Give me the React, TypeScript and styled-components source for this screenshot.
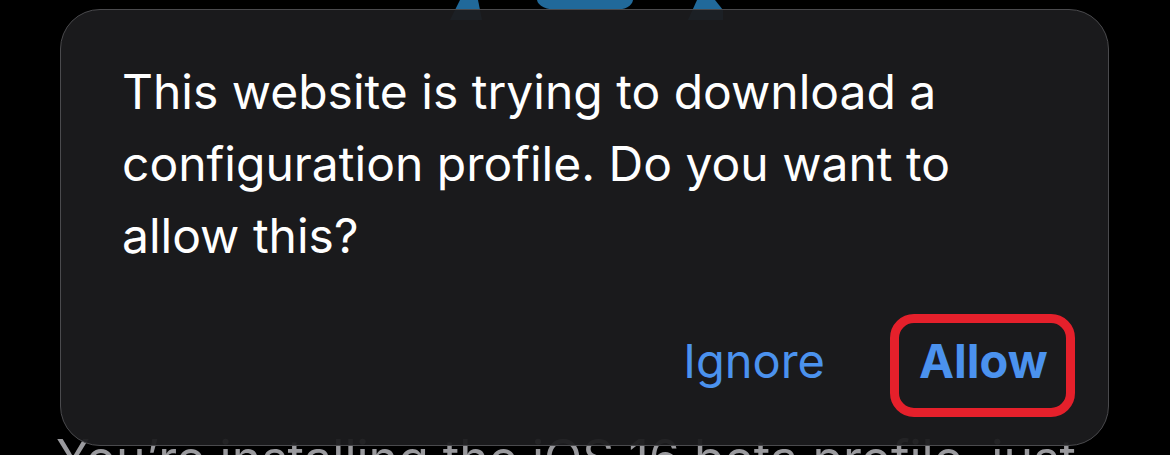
import React from "react";
import styled, { createGlobalStyle } from "styled-components";

const Global = createGlobalStyle`
  html, body { margin: 0; padding: 0; background: #000; }
  body { font-family: Inter, "Noto Sans", "Liberation Sans", sans-serif; }
`;

const Page = styled.div`
  position: relative;
  width: 1170px;
  height: 455px;
  overflow: hidden;
  background: #000;
`;

const Backdrop = styled.div`
  height: 100%;
  display: flex;
  flex-direction: column;
  justify-content: space-between;
`;

const Logo = styled.svg`
  display: block;
  width: 1170px;
  height: 20px;
`;

const BackText = styled.div`
  padding-left: 56px;
  margin-bottom: -33px;
  font-size: 50px;
  line-height: 60px;
  color: #9a9a9e;
  white-space: nowrap;
  letter-spacing: 0px;
`;

const Dialog = styled.div`
  position: absolute;
  left: 60px;
  top: 9px;
  width: 1049px;
  height: 437px;
  box-sizing: border-box;
  background: rgba(28, 28, 30, 0.94);
  border: 1.5px solid #4a4a4d;
  border-radius: 40px;
  display: flex;
  flex-direction: column;
  justify-content: space-between;
  padding: 46px 0 0 61px;
`;

const Message = styled.p`
  margin: 0;
  font-size: 48px;
  line-height: 72px;
  color: #ffffff;
  letter-spacing: 0px;
`;

const Actions = styled.div`
  display: flex;
  justify-content: flex-end;
  align-items: center;
  gap: 36px;
  padding: 0 33px 28px 0;
`;

const Action = styled.button<{ $primary?: boolean }>`
  font-family: inherit;
  background: none;
  border: 9px solid ${(p) => (p.$primary ? "#e5202b" : "transparent")};
  border-radius: 24px;
  color: #4b92ee;
  font-size: 47px;
  font-weight: ${(p) => (p.$primary ? 700 : 400)};
  padding: 0 20px 10px;
  height: 103px;
  width: ${(p) => (p.$primary ? "185px" : "auto")};
  cursor: pointer;
`;

export default function App() {
  return (
    <Page>
      <Global />
      <Backdrop>
        <Logo viewBox="0 0 1170 20">
          <g fill="#21699a">
            <path d="M450 20 L460 0 L478 0 L482 20 Z" />
            <path d="M537 0 L633 0 C632 6 626 10 612 10 L560 10 C546 10 538 6 537 0 Z" />
            <path d="M688 20 L697 0 L715 0 L723 10 L723 20 Z" />
          </g>
        </Logo>
        <BackText>You’re installing the iOS 16 beta profile, just</BackText>
      </Backdrop>
      <Dialog>
        <Message>
          This website is trying to download a<br />
          configuration profile. Do you want to
          <br />
          allow this?
        </Message>
        <Actions>
          <Action>Ignore</Action>
          <Action $primary>Allow</Action>
        </Actions>
      </Dialog>
    </Page>
  );
}
